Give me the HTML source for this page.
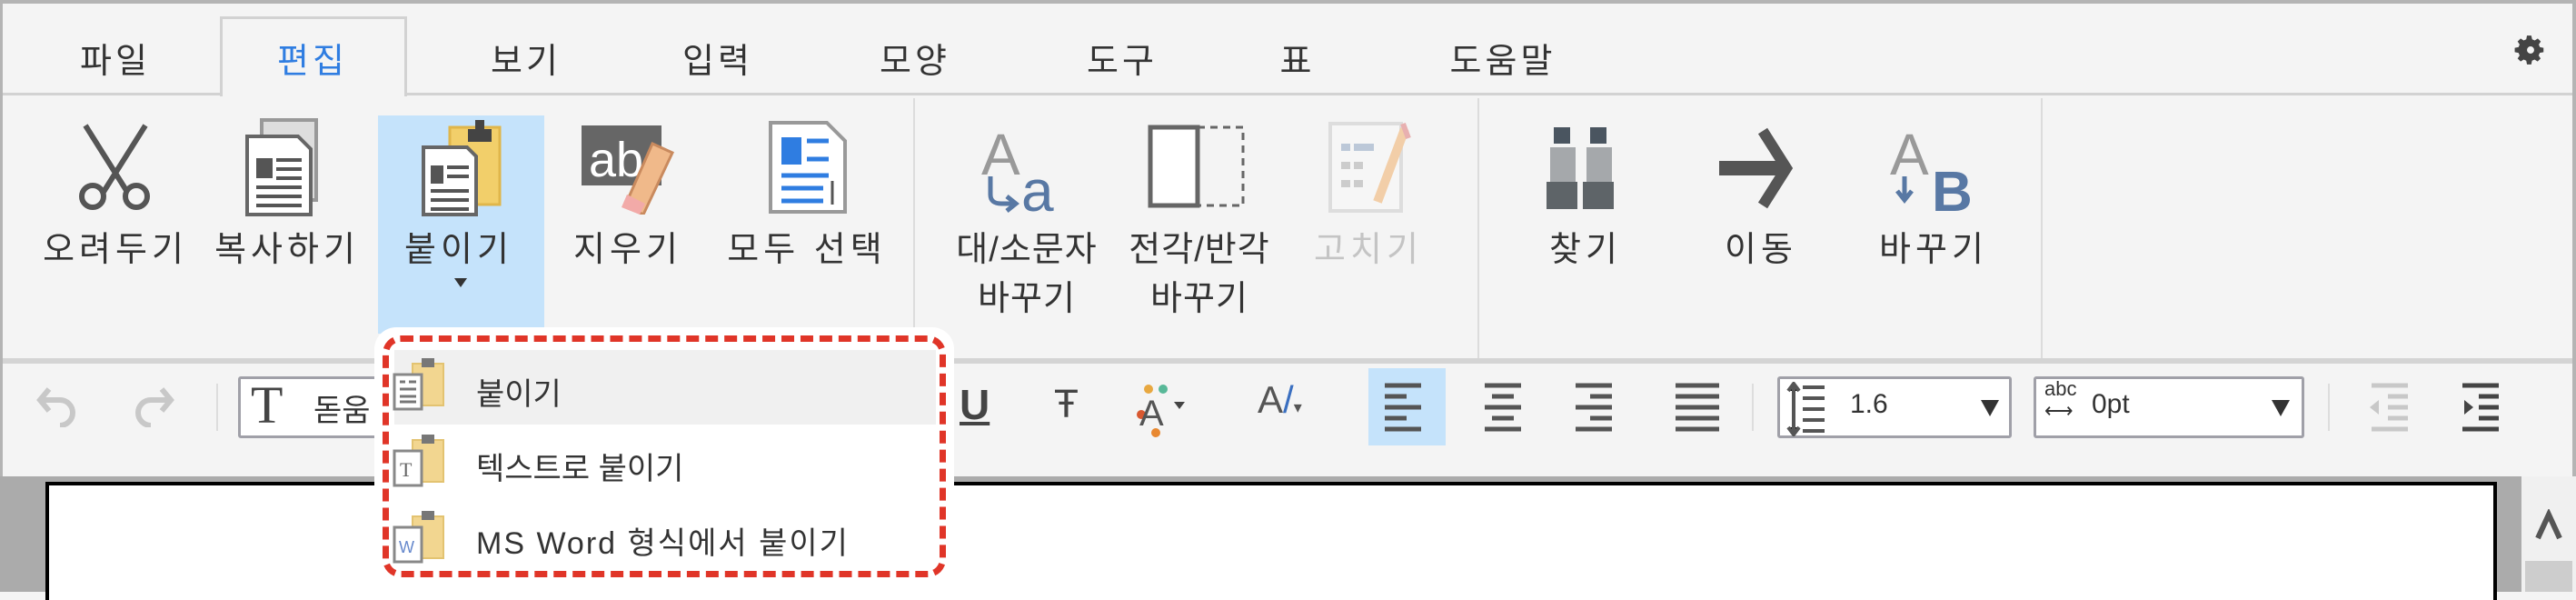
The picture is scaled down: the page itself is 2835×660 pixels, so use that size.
<!DOCTYPE html>
<html><head><meta charset="utf-8"><style>
*{margin:0;padding:0;box-sizing:border-box}
body{width:2835px;height:651px;overflow:hidden;background:#f4f4f4;position:relative;font-family:"Liberation Sans","Noto Sans CJK KR","NanumGothic",sans-serif;color:#333}
.a{position:absolute}
.tab{position:absolute;top:36px;font-size:38px;letter-spacing:4px;transform:translateX(-50%);white-space:nowrap}
.lbl{position:absolute;font-size:38px;letter-spacing:5px;transform:translateX(-50%);text-align:center;line-height:54px;white-space:nowrap}
.ic{position:absolute}
.mi{position:absolute;left:524px;font-size:34px;color:#333}
</style></head><body>
<div class="a" style="left:0;top:0;width:2835px;height:4px;background:#b4b4b4"></div>
<div class="a" style="left:0;top:0;width:3px;height:651px;background:#b4b4b4"></div>
<div class="a" style="right:0;top:0;width:4px;height:530px;background:#b4b4b4"></div>
<div class="a" style="left:3px;top:102px;width:2828px;height:3px;background:#d2d2d2"></div>
<div class="a" style="left:242px;top:18px;width:206px;height:88px;border:3px solid #d2d2d2;border-bottom:none;background:#f4f4f4"></div>
<div class="tab" style="left:127px">파일</div>
<div class="tab" style="left:344px;color:#2f7de1">편집</div>
<div class="tab" style="left:579px">보기</div>
<div class="tab" style="left:790px">입력</div>
<div class="tab" style="left:1007px">모양</div>
<div class="tab" style="left:1235px">도구</div>
<div class="tab" style="left:1428px">표</div>
<div class="tab" style="left:1654px">도움말</div>
<svg class="ic" style="left:2766px;top:34px" width="38" height="42" viewBox="0 0 24 24"><path fill="#444" d="M12 8a4 4 0 1 0 0 8 4 4 0 0 0 0-8zm9 5.5v-3l-2.5-.5-.8-1.8 1.4-2.1-2.1-2.1-2.1 1.4-1.8-.8L12.5 2h-3l-.5 2.6-1.8.8-2.1-1.4L3 6.1l1.4 2.1-.8 1.8-2.6.5v3l2.6.5.8 1.8L3 17.9 5.1 20l2.1-1.4 1.8.8.5 2.6h3l.5-2.6 1.8-.8 2.1 1.4 2.1-2.1-1.4-2.1.8-1.8z"/><circle cx="12" cy="12" r="2.5" fill="#f4f4f4"/></svg>
<div class="a" style="left:1005px;top:108px;width:2px;height:286px;background:#dcdcdc"></div>
<div class="a" style="left:1626px;top:108px;width:2px;height:286px;background:#dcdcdc"></div>
<div class="a" style="left:2246px;top:108px;width:2px;height:286px;background:#dcdcdc"></div>
<div class="a" style="left:416px;top:127px;width:183px;height:240px;background:#c5e3fb"></div>
<svg class="ic" style="left:82px;top:136px" width="90" height="95" viewBox="0 0 90 95"><g fill="none" stroke="#555" stroke-width="6"><path d="M12 2 L58 75 M78 2 L32 75"/><circle cx="20" cy="80" r="12"/><circle cx="68" cy="80" r="12"/></g></svg>
<svg class="ic" style="left:268px;top:130px" width="100" height="108" viewBox="0 0 100 108"><rect x="20" y="2" width="60" height="88" fill="#ddd" stroke="#999" stroke-width="4"/><path d="M4 20h56l14 14v72H4z" fill="#fff" stroke="#666" stroke-width="4"/><rect x="14" y="44" width="18" height="22" fill="#555"/><g stroke="#555" stroke-width="4"><path d="M36 46h28M36 56h28M36 66h28M14 76h50M14 86h50M14 96h50"/></g></svg>
<svg class="ic" style="left:460px;top:130px" width="100" height="108" viewBox="0 0 100 108"><rect x="35" y="10" width="55" height="85" fill="#f2cf6a" stroke="#e0b64a" stroke-width="3"/><path d="M55 12h26v14H55z M63 2h10v10H63z" fill="#444"/><path d="M6 32h48l10 10v64H6z" fill="#fff" stroke="#666" stroke-width="4"/><rect x="14" y="52" width="14" height="20" fill="#555"/><g stroke="#555" stroke-width="4"><path d="M32 54h24M32 64h24M14 80h42M14 90h42M14 100h42"/></g></svg>
<svg class="ic" style="left:640px;top:136px" width="110" height="100" viewBox="0 0 110 100"><rect x="0" y="2" width="88" height="66" fill="#666"/><text x="8" y="58" font-family="Liberation Sans" font-size="54" fill="#fff">ab</text><path d="M78 22l22 10-32 68-20-10z" fill="#f0b98a" stroke="#c98a5e" stroke-width="3"/><path d="M50 78l20 10-6 12-20-8z" fill="#f2aaa8"/></svg>
<svg class="ic" style="left:846px;top:133px" width="90" height="102" viewBox="0 0 90 102"><path d="M2 2h62l20 20v78H2z" fill="#fff" stroke="#999" stroke-width="4"/><rect x="14" y="18" width="22" height="30" fill="#2f7de1"/><g stroke="#2f7de1" stroke-width="5"><path d="M42 22h24M42 42h24M14 60h52M14 74h46M14 88h46"/></g><path d="M70 66v26" stroke="#555" stroke-width="3"/></svg>
<svg class="ic" style="left:1080px;top:136px" width="100" height="100" viewBox="0 0 100 100"><text x="0" y="56" font-family="Liberation Sans" font-size="64" fill="#999">A</text><text x="44" y="96" font-family="Liberation Sans" font-size="64" fill="#5878a4">a</text><path d="M10 58 v20 q0 10 12 10 h14 M28 80l10 8-10 8" fill="none" stroke="#5878a4" stroke-width="5"/></svg>
<svg class="ic" style="left:1262px;top:136px" width="110" height="95" viewBox="0 0 110 95"><rect x="4" y="4" width="52" height="86" fill="#fff" stroke="#666" stroke-width="5"/><path d="M56 4h50v86H56" fill="none" stroke="#666" stroke-width="3" stroke-dasharray="8 6"/></svg>
<svg class="ic" style="left:1460px;top:132px" width="100" height="104" viewBox="0 0 100 104"><rect x="4" y="4" width="78" height="96" fill="#f6f6f6" stroke="#ddd" stroke-width="4"/><g stroke="#bcc8d8" stroke-width="8"><path d="M16 30h10M30 30h22"/></g><g stroke="#ccc" stroke-width="8"><path d="M16 50h10M30 50h10M16 70h10M30 70h10"/></g><path d="M86 10l-30 80" stroke="#f2cea8" stroke-width="10"/><path d="M84 4l6 16" stroke="#e8b0b0" stroke-width="6"/></svg>
<svg class="ic" style="left:1700px;top:136px" width="90" height="96" viewBox="0 0 90 96"><rect x="10" y="4" width="18" height="18" fill="#4a5560"/><rect x="50" y="4" width="18" height="18" fill="#4a5560"/><rect x="6" y="26" width="28" height="44" fill="#a5a8ab"/><rect x="46" y="26" width="28" height="44" fill="#a5a8ab"/><rect x="2" y="64" width="34" height="30" fill="#5e6468"/><rect x="42" y="64" width="34" height="30" fill="#5e6468"/></svg>
<svg class="ic" style="left:1888px;top:140px" width="100" height="90" viewBox="0 0 100 90"><path d="M4 45h76" stroke="#555" stroke-width="16"/><path d="M52 4l26 41-26 41" fill="none" stroke="#555" stroke-width="12"/></svg>
<svg class="ic" style="left:2080px;top:136px" width="100" height="100" viewBox="0 0 100 100"><text x="0" y="56" font-family="Liberation Sans" font-size="64" fill="#999">A</text><text x="46" y="96" font-family="Liberation Sans" font-weight="bold" font-size="62" fill="#5878a4">B</text><path d="M16 58 v22 M8 74l8 10 8-10" fill="none" stroke="#5878a4" stroke-width="5"/></svg>
<div class="lbl" style="left:127px;top:248px">오려두기</div>
<div class="lbl" style="left:316px;top:248px">복사하기</div>
<div class="lbl" style="left:505px;top:248px">붙이기</div>
<svg class="ic" style="left:500px;top:306px" width="14" height="10"><path d="M0 0h14L7 10z" fill="#333"/></svg>
<div class="lbl" style="left:691px;top:248px">지우기</div>
<div class="lbl" style="left:888px;top:248px">모두 선택</div>
<div class="lbl" style="left:1130px;top:248px;letter-spacing:1px">대/소문자<br>바꾸기</div>
<div class="lbl" style="left:1320px;top:248px;letter-spacing:1px">전각/반각<br>바꾸기</div>
<div class="lbl" style="left:1506px;top:248px;color:#c4c4c4">고치기</div>
<div class="lbl" style="left:1745px;top:248px">찾기</div>
<div class="lbl" style="left:1938px;top:248px">이동</div>
<div class="lbl" style="left:2128px;top:248px">바꾸기</div>
<div class="a" style="left:3px;top:394px;width:2828px;height:6px;background:#d4d4d4"></div>
<div class="a" style="left:0;top:524px;width:2835px;height:127px;background:#ababab"></div>
<svg class="ic" style="left:40px;top:420px" width="50" height="50" viewBox="0 0 50 50"><path d="M14 8L4 20l10 12 M4 20h22a14 14 0 0 1 0 28" fill="none" stroke="#c8c8c8" stroke-width="6"/></svg>
<svg class="ic" style="left:142px;top:420px" width="50" height="50" viewBox="0 0 50 50"><path d="M36 8l10 12-10 12 M46 20H24a14 14 0 0 0 0 28" fill="none" stroke="#c8c8c8" stroke-width="6"/></svg>
<div class="a" style="left:238px;top:422px;width:2px;height:52px;background:#ddd"></div>
<div class="a" style="left:262px;top:414px;width:200px;height:68px;background:#fff;border:3px solid #a0a0a8;border-radius:3px"></div>
<div class="a" style="left:276px;top:412px;font-family:'Liberation Serif',serif;font-size:58px;color:#444">T</div>
<div class="a" style="left:345px;top:424px;font-size:34px">돋움</div>
<div class="a" style="left:1056px;top:418px;font-size:46px;font-weight:bold;color:#444;text-decoration:underline">U</div>
<div class="a" style="left:1160px;top:420px;font-size:44px;color:#444">Ŧ</div>
<svg class="ic" style="left:1248px;top:420px" width="60" height="66"><circle cx="16" cy="8" r="5" fill="#e8a840"/><circle cx="32" cy="8" r="5" fill="#58b898"/><circle cx="8" cy="36" r="5" fill="#d85830"/><circle cx="24" cy="56" r="5" fill="#e88830"/><text x="6" y="48" font-family="Liberation Sans" font-size="40" fill="#555">A</text><path d="M44 22h12l-6 8z" fill="#444"/></svg>
<div class="a" style="left:1384px;top:416px;font-size:42px;color:#555">A<span style="color:#3a6fc0">/</span><span style="font-size:18px">▾</span></div>
<div class="a" style="left:1506px;top:405px;width:85px;height:85px;background:#c5e3fb"></div>
<svg class="ic" style="left:1520px;top:420px" width="56" height="60"><g stroke="#555" stroke-width="5"><path d="M4 4h40M4 16h24M4 28h40M4 40h24M4 52h40"/></g></svg>
<svg class="ic" style="left:1630px;top:420px" width="56" height="60"><g stroke="#555" stroke-width="5"><path d="M4 4h40M12 16h24M4 28h40M12 40h24M4 52h40"/></g></svg>
<svg class="ic" style="left:1730px;top:420px" width="56" height="60"><g stroke="#555" stroke-width="5"><path d="M4 4h40M20 16h24M4 28h40M20 40h24M4 52h40"/></g></svg>
<svg class="ic" style="left:1840px;top:420px" width="56" height="60"><g stroke="#555" stroke-width="5"><path d="M4 4h48M4 16h48M4 28h48M4 40h48M4 52h48"/></g></svg>
<div class="a" style="left:1928px;top:422px;width:2px;height:52px;background:#ddd"></div>
<div class="a" style="left:1956px;top:414px;width:258px;height:68px;background:#fff;border:3px solid #a0a0a8;border-radius:3px"></div>
<svg class="ic" style="left:1966px;top:420px" width="44" height="60"><g stroke="#555" stroke-width="4"><path d="M8 4v52M2 10l6-8 6 8M2 50l6 8 6-8M18 6h24M18 18h24M18 30h24M18 42h24M18 54h24"/></g></svg>
<div class="a" style="left:2036px;top:428px;font-size:30px">1.6</div>
<svg class="ic" style="left:2180px;top:440px" width="20" height="18"><path d="M0 0h20L10 18z" fill="#333"/></svg>
<div class="a" style="left:2238px;top:414px;width:298px;height:68px;background:#fff;border:3px solid #a0a0a8;border-radius:3px"></div>
<div class="a" style="left:2250px;top:416px;font-size:22px;line-height:24px">abc<br>⟷</div>
<div class="a" style="left:2302px;top:428px;font-size:30px">0pt</div>
<svg class="ic" style="left:2500px;top:440px" width="20" height="18"><path d="M0 0h20L10 18z" fill="#333"/></svg>
<div class="a" style="left:2562px;top:422px;width:2px;height:52px;background:#ddd"></div>
<svg class="ic" style="left:2606px;top:420px" width="50" height="60"><g stroke="#c8c8c8" stroke-width="5"><path d="M4 4h40M22 16h22M22 28h22M22 40h22M4 52h40"/></g><path d="M2 28l10-8v16z" fill="#c8c8c8"/></svg>
<svg class="ic" style="left:2706px;top:420px" width="50" height="60"><g stroke="#444" stroke-width="5"><path d="M4 4h40M22 16h22M22 28h22M22 40h22M4 52h40"/></g><path d="M16 28l-10-8v16z" fill="#444"/></svg>
<div class="a" style="left:50px;top:530px;width:2698px;height:130px;background:#fff;border:4px solid #000;border-bottom:none"></div>
<div class="a" style="left:2775px;top:524px;width:60px;height:127px;background:#f0f0f0"></div>
<svg class="ic" style="left:2790px;top:560px" width="30" height="36"><path d="M3 32L15 6l12 26" fill="none" stroke="#555" stroke-width="6"/></svg>
<div class="a" style="left:2779px;top:617px;width:52px;height:34px;background:#cdcdcd"></div>
<div class="a" style="left:412px;top:360px;width:638px;height:291px;background:#fff;border-radius:24px"></div>
<div class="a" style="left:421px;top:369px;width:620px;height:266px;border:7px dashed #e03528;border-radius:20px"></div>
<div class="a" style="left:434px;top:385px;width:596px;height:82px;background:#f0f0f0"></div>
<svg class="ic" style="left:430px;top:392px" width="66" height="60" viewBox="0 0 66 60"><rect x="24" y="8" width="34" height="46" fill="#f2d690" stroke="#e3c371" stroke-width="2"/><rect x="34" y="2" width="14" height="10" fill="#777"/><rect x="4" y="20" width="30" height="38" fill="#fff" stroke="#888" stroke-width="3"/><g stroke="#777" stroke-width="3"><path d="M10 28h6M20 28h8M10 36h18M10 44h18M10 50h18"/></g></svg>
<svg class="ic" style="left:430px;top:476px" width="66" height="60" viewBox="0 0 66 60"><rect x="24" y="8" width="34" height="46" fill="#f2d690" stroke="#e3c371" stroke-width="2"/><rect x="34" y="2" width="14" height="10" fill="#777"/><rect x="4" y="20" width="30" height="38" fill="#fff" stroke="#888" stroke-width="3"/><text x="10" y="48" font-family="Liberation Serif" font-size="22" fill="#666">T</text></svg>
<svg class="ic" style="left:430px;top:560px" width="66" height="60" viewBox="0 0 66 60"><rect x="24" y="8" width="34" height="46" fill="#f2d690" stroke="#e3c371" stroke-width="2"/><rect x="34" y="2" width="14" height="10" fill="#777"/><rect x="4" y="20" width="30" height="38" fill="#fff" stroke="#888" stroke-width="3"/><text x="9" y="48" font-family="Liberation Sans" font-size="18" fill="#6688cc">W</text></svg>
<div class="mi" style="top:406px">붙이기</div>
<div class="mi" style="top:488px">텍스트로 붙이기</div>
<div class="mi" style="top:570px;letter-spacing:2px">MS Word 형식에서 붙이기</div>
</body></html>
